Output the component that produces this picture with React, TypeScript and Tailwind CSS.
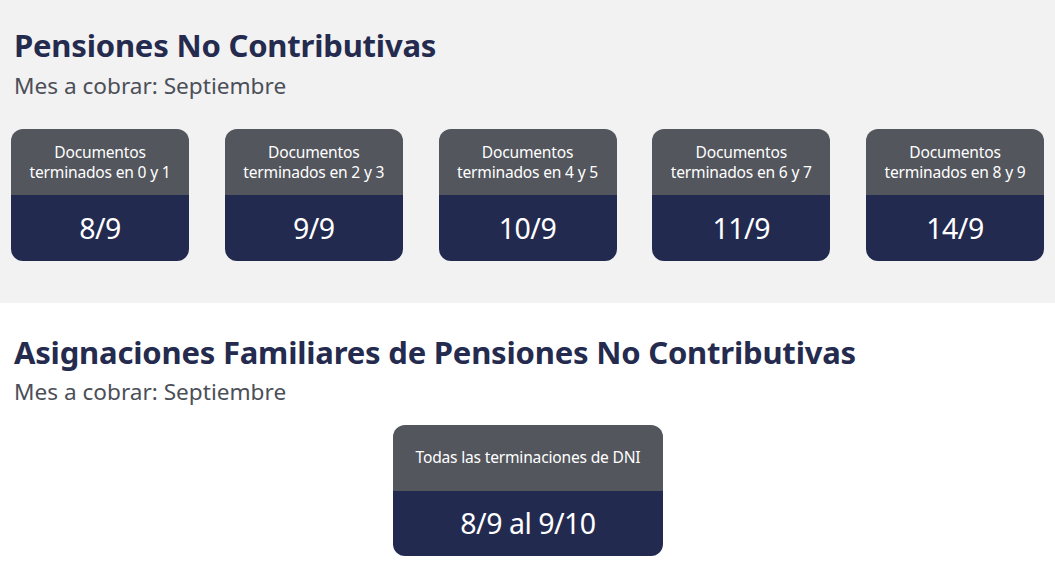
import React from "react";

const cards = [
  { t: "terminados en 0 y 1", d: "8/9" },
  { t: "terminados en 2 y 3", d: "9/9" },
  { t: "terminados en 4 y 5", d: "10/9" },
  { t: "terminados en 6 y 7", d: "11/9" },
  { t: "terminados en 8 y 9", d: "14/9" },
];

export default function App() {
  return (
    <div className="w-[1055px] h-[588px] overflow-hidden bg-white" style={{ fontFamily: '"Noto Sans", "Open Sans", sans-serif' }}>
      <section className="bg-[#f2f2f2] h-[303px] pt-[26px]">
        <h1 className="px-[14px] text-[31px] leading-[38px] font-bold text-[#242b4e] tracking-[-0.2px]">Pensiones No Contributivas</h1>
        <p className="px-[14px] text-[22.6px] leading-[30px] text-[#4b4f58] mt-[7px]">Mes a cobrar: Septiembre</p>
        <div className="flex justify-between px-[11px] mt-[28px]">
          {cards.map((c) => (
            <div key={c.d} className="w-[178px] rounded-[12px] overflow-hidden">
              <div className="h-[66px] bg-[#53565d] flex flex-col items-center justify-center text-white text-[15.6px] leading-[20px] tracking-[-0.2px]">
                <span>Documentos</span>
                <span>{c.t}</span>
              </div>
              <div className="h-[66px] bg-[#232a50] flex items-center justify-center text-white text-[28.5px] tracking-[-0.5px]">{c.d}</div>
            </div>
          ))}
        </div>
      </section>
      <section className="pt-[30px]">
        <h2 className="px-[14px] text-[31px] leading-[38px] font-bold text-[#242b4e] tracking-[-0.2px]">Asignaciones Familiares de Pensiones No Contributivas</h2>
        <p className="px-[14px] text-[22.6px] leading-[30px] text-[#4b4f58] mt-[6px]">Mes a cobrar: Septiembre</p>
        <div className="flex justify-center mt-[18px] pl-[1px]">
          <div className="w-[270px] rounded-[12px] overflow-hidden">
            <div className="h-[66px] bg-[#53565d] flex items-center justify-center text-white text-[15.6px] tracking-[-0.2px]">Todas las terminaciones de DNI</div>
            <div className="h-[65px] bg-[#232a50] flex items-center justify-center text-white text-[28.5px] tracking-[-0.5px]">8/9 al 9/10</div>
          </div>
        </div>
      </section>
    </div>
  );
}
